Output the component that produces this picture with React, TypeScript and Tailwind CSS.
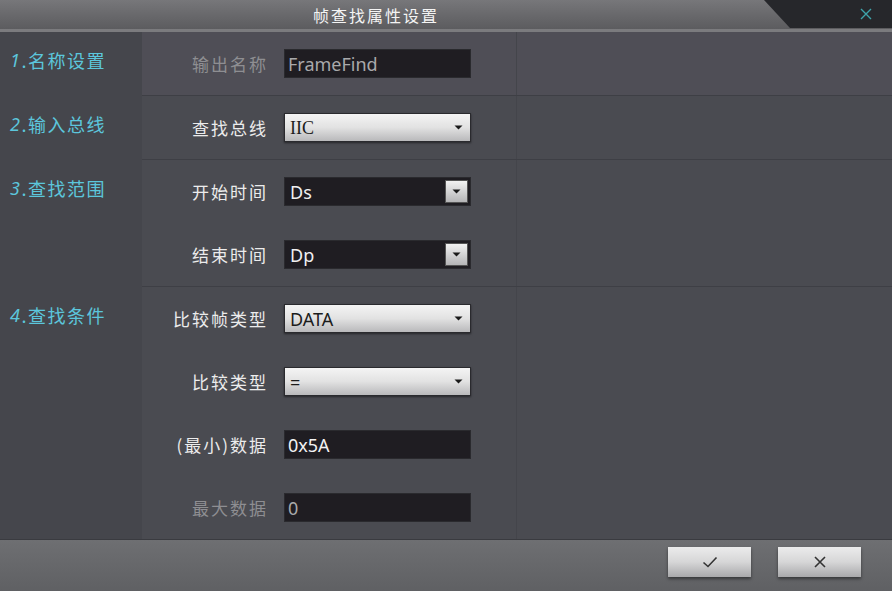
import React from "react";

const cjk = { fontFamily: '"Noto Sans CJK SC", "Noto Sans", sans-serif' };
const lat = { fontFamily: '"Noto Sans", "Noto Sans CJK SC", sans-serif' };

function Arrow() {
  return (
    <svg width="9" height="5" viewBox="0 0 9 5" className="shrink-0">
      <path d="M0.5 0.5 L8.5 0.5 L4.5 4.5 Z" fill="#1a1a1a" />
    </svg>
  );
}

function LightSelect({ value, serif }: { value: string; serif?: boolean }) {
  return (
    <div className="w-[187px] h-[29px] flex items-center justify-between pl-[5px] pr-[7px] border border-[#2a2a2e] bg-gradient-to-b from-[#f4f4f4] via-[#e2e2e2] to-[#b9b9bb] shadow-[0_1px_2px_rgba(0,0,0,0.5)]">
      <span
        className="text-[18px] text-[#1c1c1c] leading-none"
        style={serif ? { fontFamily: '"Liberation Serif", serif' } : lat}
      >
        {value}
      </span>
      <Arrow />
    </div>
  );
}

function DarkSelect({ value }: { value: string }) {
  return (
    <div className="w-[187px] h-[29px] flex items-center justify-between pl-[5px] pr-[2px] bg-[#1f1d22] border border-[#2a2a2e]">
      <span className="text-[18px] text-[#f0f0f0] leading-none" style={lat}>
        {value}
      </span>
      <div className="w-[23px] h-[23px] flex items-center justify-center bg-gradient-to-b from-[#f2f2f2] to-[#b5b5b7] border border-[#555]">
        <Arrow />
      </div>
    </div>
  );
}

function DarkInput({ value, dim }: { value: string; dim?: boolean }) {
  return (
    <div className="w-[187px] h-[29px] flex items-center pl-[3px] bg-[#1f1d22] border border-[#2a2a2e]">
      <span
        className={`text-[18px] leading-none ${dim ? "text-[#a9a9ab]" : "text-[#f2f2f2]"}`}
        style={lat}
      >
        {value}
      </span>
    </div>
  );
}

function Row({
  label,
  dim,
  children,
}: {
  label: string;
  dim?: boolean;
  children: React.ReactNode;
}) {
  return (
    <div className="h-[63px] flex items-center">
      <div
        className={`w-[124px] text-right text-[17px] tracking-[2px] pr-[16px] ${dim ? "text-[#8e8e92]" : "text-[#ececec]"}`}
        style={cjk}
      >
        {label}
      </div>
      {children}
    </div>
  );
}

function SectionLabel({ n, text }: { n: string; text: string }) {
  return (
    <div className="h-[63px] flex items-center pl-[10px] pb-[6px] text-[18px] tracking-[1.5px] text-[#5cc6dc]" style={cjk}>
      <span className="italic" style={lat}>{n}</span>
      <span>.{text}</span>
    </div>
  );
}

function Section({
  n,
  text,
  light,
  last,
  children,
}: {
  n: string;
  text: string;
  light?: boolean;
  last?: boolean;
  children: React.ReactNode;
}) {
  return (
    <div className="flex">
      <div className="w-[142px] bg-[#45464c]">
        <SectionLabel n={n} text={text} />
      </div>
      <div
        className={`flex-1 flex ${light ? "bg-[#4f4e56]" : "bg-[#4a4b51]"} ${last ? "" : "border-b border-[#3e3f45]"}`}
      >
        <div className="w-[375px] border-r border-[#44454b] pl-[18px]">{children}</div>
        <div className="flex-1" />
      </div>
    </div>
  );
}

export default function App() {
  return (
    <div className="w-[892px] h-[591px] flex flex-col bg-[#45464c] overflow-hidden">
      {/* Title bar */}
      <div className="relative h-[32px] shrink-0 bg-gradient-to-b from-[#77777a] via-[#69696c] to-[#5c5c5f] border-b-[3px] border-[#7b7b7e]">
        <div className="h-full flex items-center pl-[313px]">
          <span className="text-[16px] tracking-[2px] text-[#f4f4f4]" style={cjk}>
            帧查找属性设置
          </span>
        </div>
        <svg className="absolute right-0 top-0" width="128" height="28" viewBox="0 0 128 28">
          <polygon points="0,0 128,0 128,28 26,28" fill="#26272b" />
        </svg>
        <svg className="absolute right-[20px] top-[8px]" width="12" height="12" viewBox="0 0 12 12">
          <path d="M1 1 L11 11 M11 1 L1 11" stroke="#3ea3aa" strokeWidth="1.4" />
        </svg>
      </div>

      {/* Body */}
      <div className="flex-1 flex flex-col">
        <Section n="1" text="名称设置" light>
          <Row label="输出名称" dim>
            <DarkInput value="FrameFind" dim />
          </Row>
        </Section>
        <Section n="2" text="输入总线">
          <Row label="查找总线">
            <LightSelect value="IIC" serif />
          </Row>
        </Section>
        <Section n="3" text="查找范围">
          <Row label="开始时间">
            <DarkSelect value="Ds" />
          </Row>
          <Row label="结束时间">
            <DarkSelect value="Dp" />
          </Row>
        </Section>
        <Section n="4" text="查找条件" last>
          <Row label="比较帧类型">
            <LightSelect value="DATA" />
          </Row>
          <Row label="比较类型">
            <LightSelect value="=" />
          </Row>
          <Row label="(最小)数据">
            <DarkInput value="0x5A" />
          </Row>
          <Row label="最大数据" dim>
            <DarkInput value="0" dim />
          </Row>
        </Section>
      </div>

      {/* Footer */}
      <div className="h-[53px] shrink-0 flex items-center justify-end gap-[27px] pr-[31px] bg-gradient-to-b from-[#6e6f72] to-[#5f6063] border-t border-[#3a3b40]">
        <button className="w-[83px] h-[30px] flex items-center justify-center bg-gradient-to-b from-[#ececec] via-[#d6d6d7] to-[#a9a9ab] shadow-[0_2px_3px_rgba(0,0,0,0.45)] mb-[8px]">
          <svg width="16" height="12" viewBox="0 0 16 12">
            <path d="M1.5 6.5 L6 10.5 L14.5 1.5" stroke="#333" strokeWidth="1.6" fill="none" />
          </svg>
        </button>
        <button className="w-[83px] h-[30px] flex items-center justify-center bg-gradient-to-b from-[#ececec] via-[#d6d6d7] to-[#a9a9ab] shadow-[0_2px_3px_rgba(0,0,0,0.45)] mb-[8px]">
          <svg width="12" height="12" viewBox="0 0 12 12">
            <path d="M1 1 L11 11 M11 1 L1 11" stroke="#333" strokeWidth="1.6" />
          </svg>
        </button>
      </div>
    </div>
  );
}
